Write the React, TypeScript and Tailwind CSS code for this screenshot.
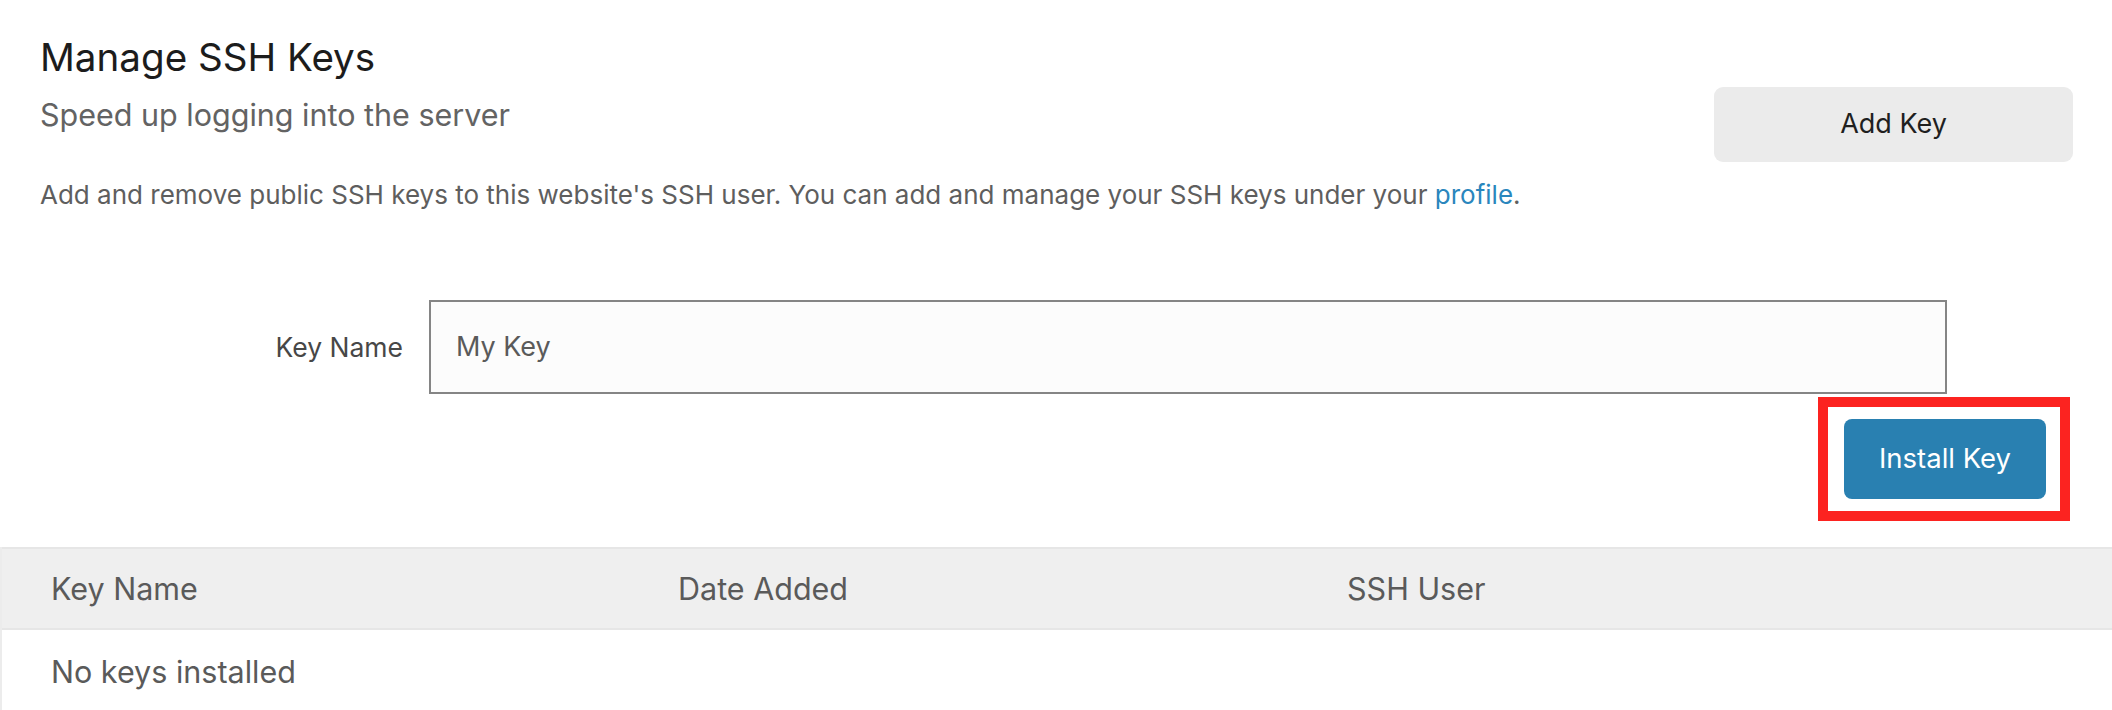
import React from "react";

export default function App() {
  return (
    <div className="w-[2112px] h-[710px] overflow-hidden bg-white font-['Inter','Noto_Sans',sans-serif]">
      <div className="pl-10 pr-[39px] pt-[33px]">
        <div className="flex justify-between items-start">
          <div>
            <h1 className="text-[38.6px] leading-[48px] font-normal text-[#1c1c1c]">Manage SSH Keys</h1>
            <p className="mt-[14px] text-[30.5px] leading-[40px] text-[#636363]">Speed up logging into the server</p>
          </div>
          <button className="mt-[54px] w-[359px] h-[75px] rounded-[9px] bg-[#ebebeb] text-[27px] text-[#1f1f1f]">
            Add Key
          </button>
        </div>
        <p className="mt-[15px] text-[26px] leading-[36px] text-[#5e5e5e]">
          Add and remove public SSH keys to this website's SSH user. You can add and manage your SSH keys under your{" "}
          <a className="text-[#2a86bd]">profile</a>.
        </p>
      </div>

      <div className="mt-[87px] flex items-center">
        <label className="w-[403px] text-right text-[26.5px] leading-[34px] text-[#474747]">Key Name</label>
        <div className="ml-[26px] w-[1518px] h-[94px] border-2 border-[#858585] bg-[#fcfcfc] flex items-center pl-[25px] text-[27px] text-[#5a5a5a]">
          My Key
        </div>
      </div>

      <div className="mt-[25px] flex justify-end pr-[66px]">
        <div className="relative">
          <button className="w-[202px] h-[80px] rounded-[8px] bg-[#2980b1] text-white text-[27.5px]">
            Install Key
          </button>
          <div className="absolute left-[-26px] right-[-24px] top-[-22px] bottom-[-22px] border-[10px] border-[#fc2320] pointer-events-none" />
        </div>
      </div>

      <div className="mt-[48px] border-l-2 border-[#ececec]">
        <div className="flex items-center h-[83px] bg-[#efefef] border-t-2 border-b-2 border-[#e6e6e6] text-[30.5px] text-[#5a5a5a]">
          <div className="w-[627px] pl-[49px]">Key Name</div>
          <div className="w-[669px] pl-[49px]">Date Added</div>
          <div className="flex-1 pl-[49px]">SSH User</div>
        </div>
        <div className="flex items-center h-[83px] text-[30.5px] text-[#5a5a5a]">
          <div className="pl-[49px]">No keys installed</div>
        </div>
      </div>
    </div>
  );
}
